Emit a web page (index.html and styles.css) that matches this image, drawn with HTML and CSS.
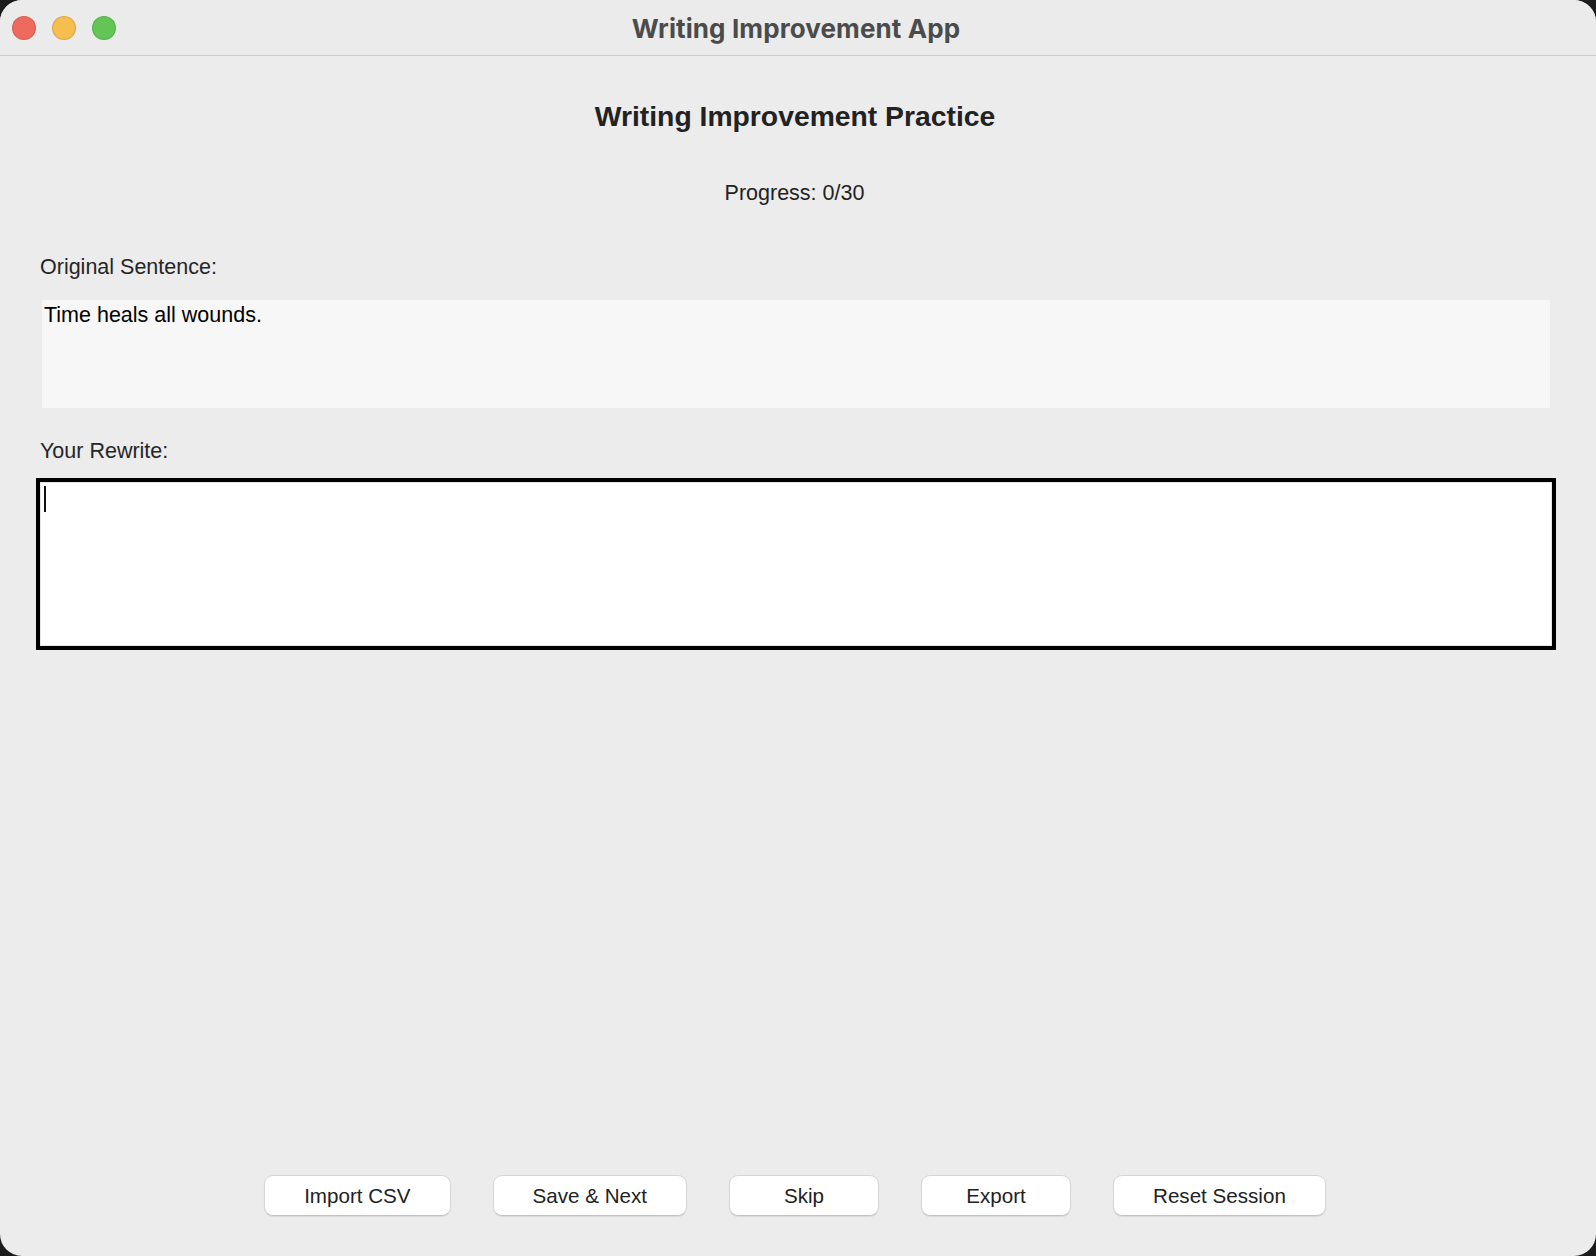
FILE: index.html
```html
<!DOCTYPE html>
<html lang="en">
<head>
<meta charset="utf-8">
<title>Writing Improvement App</title>
<link rel="stylesheet" href="styles.css">
</head>
<body>
<div class="window">
  <header class="titlebar">
    <div class="lights">
      <span class="light red"></span>
      <span class="light yellow"></span>
      <span class="light green"></span>
    </div>
    <div class="wintitle">Writing Improvement App</div>
    <div class="spacer"></div>
  </header>
  <main class="content">
    <h1 class="heading">Writing Improvement Practice</h1>
    <div class="progress">Progress: 0/30</div>
    <div class="label label-original">Original Sentence:</div>
    <div class="original">Time heals all wounds.</div>
    <div class="label label-rewrite">Your Rewrite:</div>
    <div class="rewrite"><span class="caret"></span></div>
    <div class="buttons">
      <button class="btn">Import CSV</button>
      <button class="btn">Save &amp; Next</button>
      <button class="btn">Skip</button>
      <button class="btn">Export</button>
      <button class="btn">Reset Session</button>
    </div>
  </main>
</div>
</body>
</html>
```

FILE: styles.css
```css
html, body {
  margin: 0;
  padding: 0;
  background: #1c1c1c;
}
body {
  width: 1596px;
  height: 1256px;
  overflow: hidden;
  font-family: "Liberation Sans", Arial, sans-serif;
}
.window {
  width: 1596px;
  height: 1256px;
  background: #ececec;
  border-radius: 22px;
  overflow: hidden;
  display: flex;
  flex-direction: column;
}
.titlebar {
  height: 55px;
  border-bottom: 1px solid #cdcdcd;
  background: #ebebeb;
  display: grid;
  grid-template-columns: 1fr auto 1fr;
  align-items: center;
}
.lights {
  display: flex;
  gap: 16px;
  padding-left: 12px;
  padding-top: 1px;
}
.light {
  width: 22px;
  height: 22px;
  border-radius: 50%;
  border: 1px solid rgba(0, 0, 0, 0.12);
}
.red { background: #ee6a5f; }
.yellow { background: #f5be4f; }
.green { background: #62c554; }
.wintitle {
  font-family: "Inter", "Liberation Sans", sans-serif;
  font-weight: 700;
  font-size: 26px;
  color: #4b4b4b;
  letter-spacing: 0.1px;
  padding-top: 1px;
  padding-right: 4px;
}
.content {
  flex: 1;
  display: flex;
  flex-direction: column;
  padding: 43px 44px 40px 40px;
}
.heading {
  margin: 0;
  text-align: center;
  font-size: 28.3px;
  line-height: 34px;
  font-weight: 700;
  color: #222;
  padding-right: 2px;
}
.progress {
  margin-top: 47px;
  text-align: center;
  font-size: 21.5px;
  line-height: 26px;
  color: #222;
  padding-right: 3px;
}
.label {
  font-size: 21.5px;
  line-height: 26px;
  color: #262626;
}
.label-original { margin-top: 48px; }
.original {
  margin: 20px 2px 0 2px;
  height: 108px;
  box-sizing: border-box;
  background: #f7f7f7;
  padding: 2px 2px;
  font-size: 21.5px;
  line-height: 26px;
  color: #000;
}
.label-rewrite { margin-top: 30px; }
.rewrite {
  margin: 14px -4px 0 -4px;
  height: 172px;
  box-sizing: border-box;
  border: 4px solid #000;
  background: #fff;
  box-shadow: inset 0 0 0 1px #e4e4e4;
  padding: 4px 0 0 4px;
}
.caret {
  display: block;
  width: 2px;
  height: 26px;
  background: #111;
}
.buttons {
  margin-top: auto;
  display: flex;
  justify-content: center;
  gap: 42px;
  padding-right: 2px;
}
.btn {
  height: 41px;
  min-width: 150px;
  box-sizing: border-box;
  padding: 0 39px;
  background: #fff;
  border: 1px solid #d6d6d6;
  border-bottom-color: #c2c2c2;
  border-radius: 9px;
  box-shadow: 0 1px 1px rgba(0, 0, 0, 0.08);
  font-family: "Liberation Sans", Arial, sans-serif;
  font-size: 20.6px;
  color: #222;
  line-height: 39px;
}
```
